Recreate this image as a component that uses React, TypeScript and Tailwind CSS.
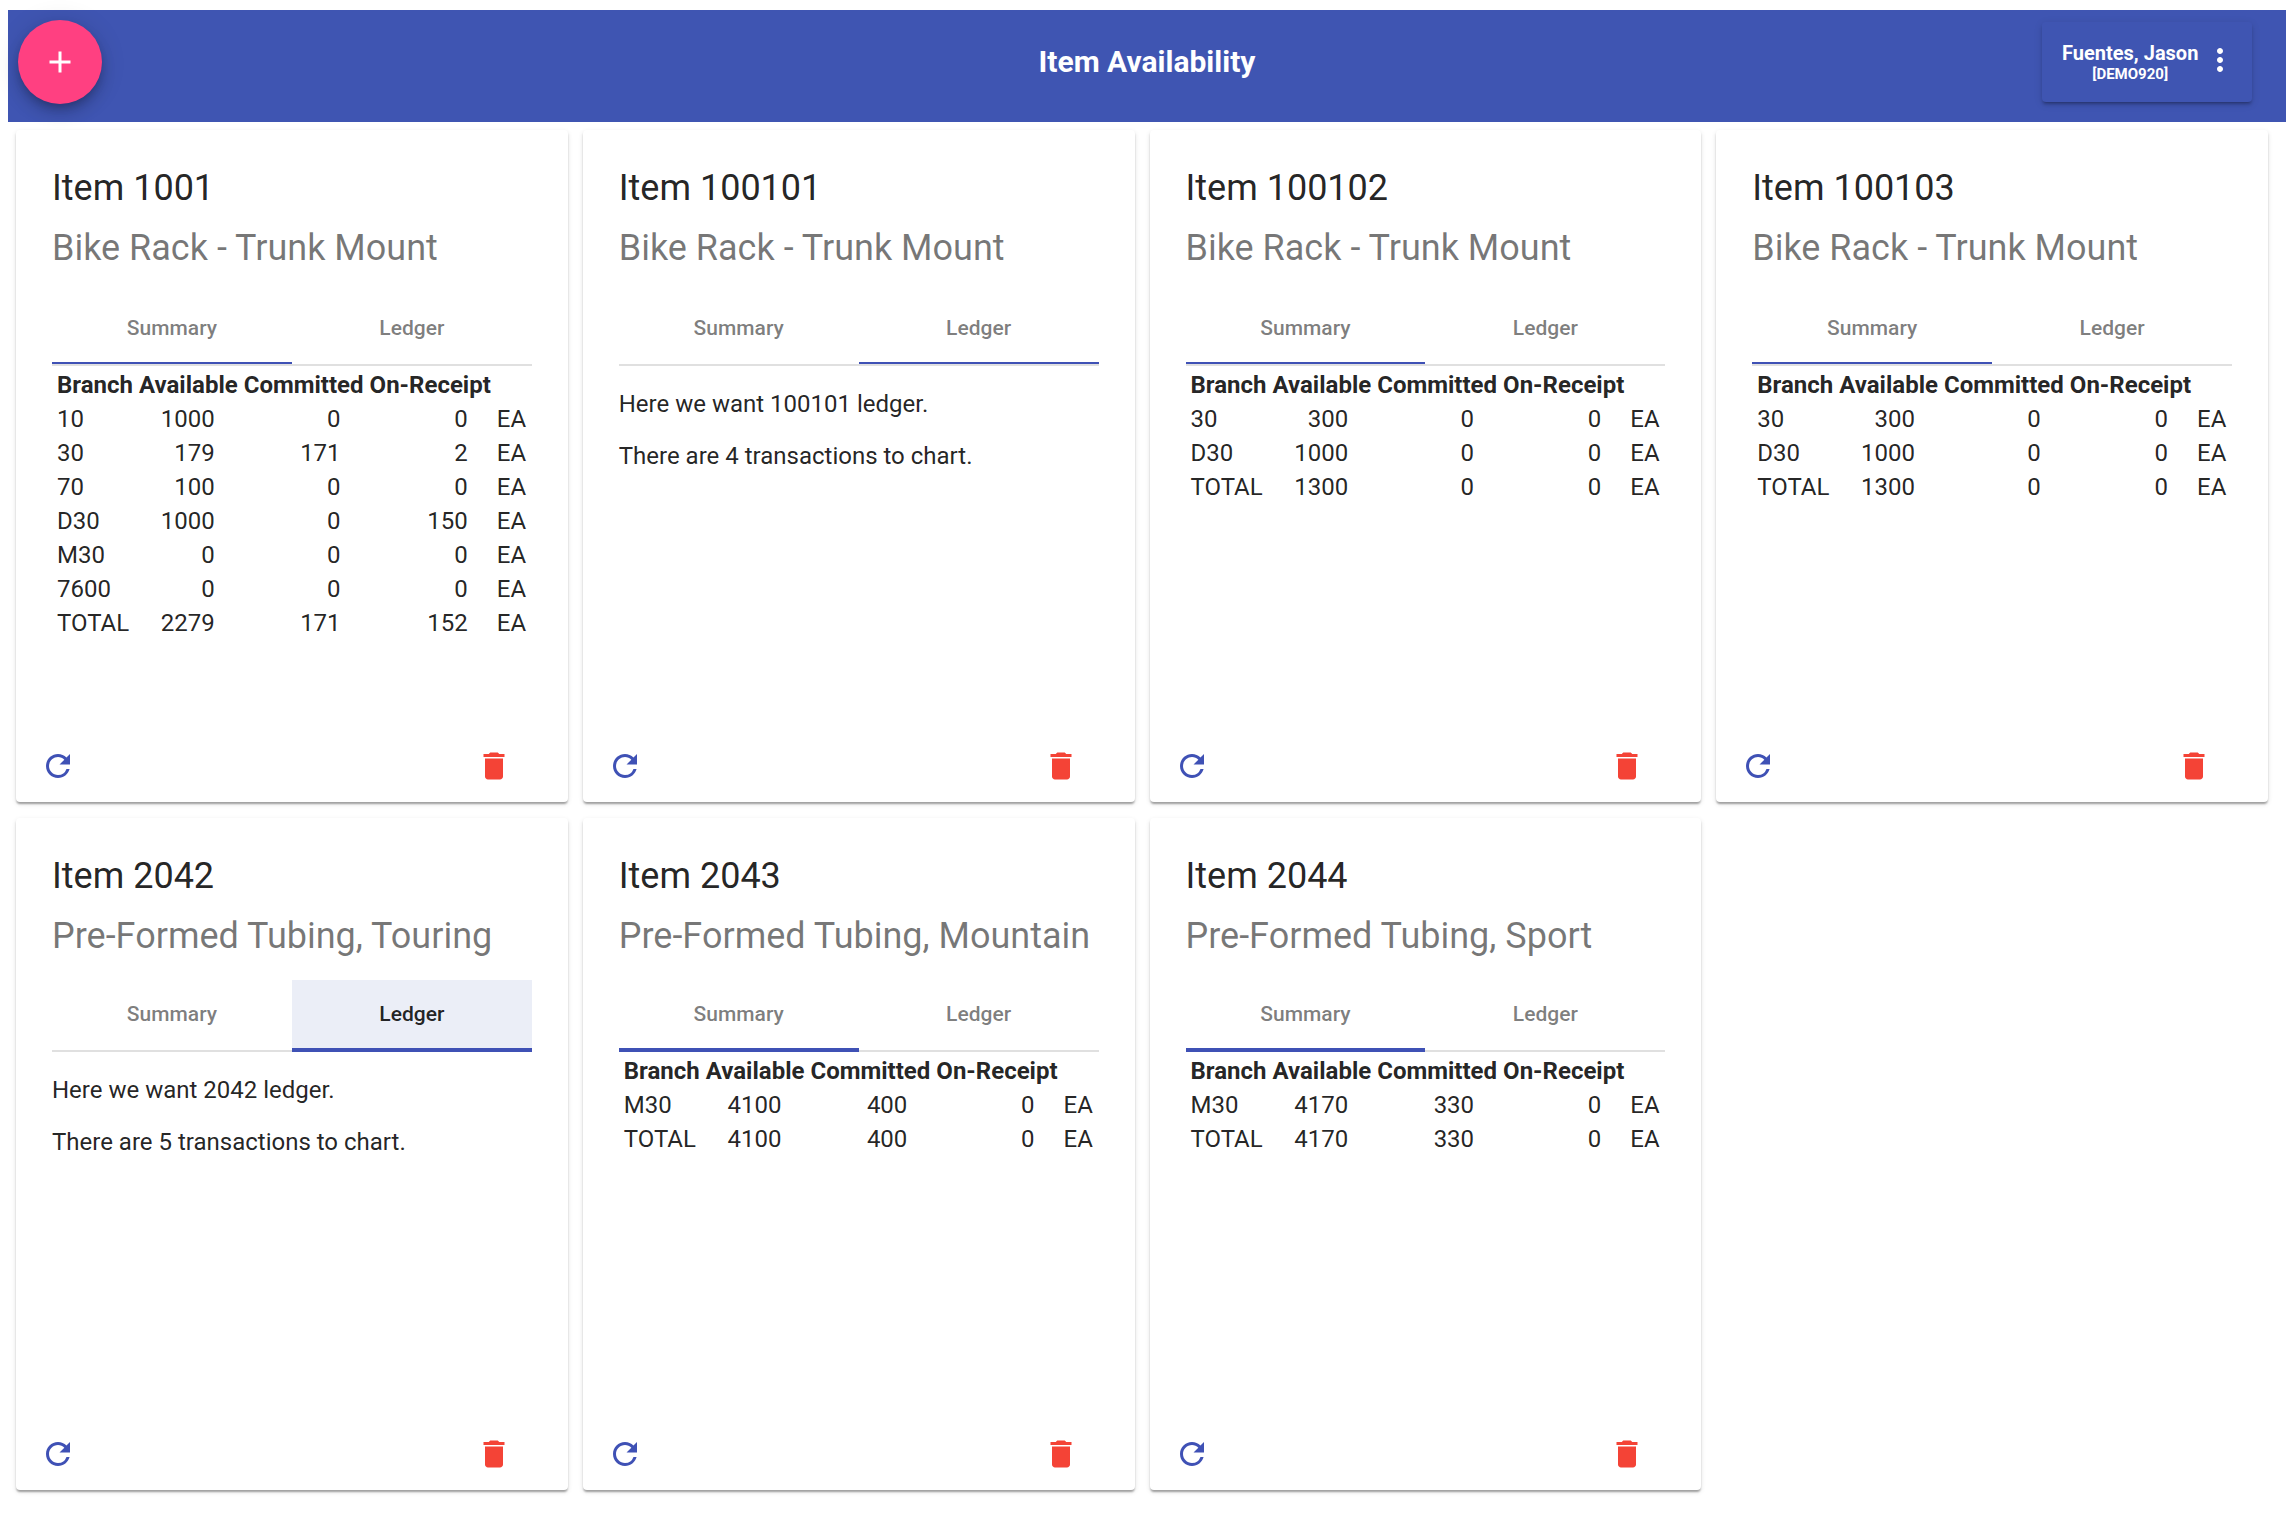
import { useState } from 'react';
import clsx from 'clsx';
import { MdAdd, MdDelete, MdMoreVert, MdRefresh } from 'react-icons/md';

type Tab = 'Summary' | 'Ledger';
type Row = [branch: string, available: number, committed: number, onReceipt: number];

type Item = {
  id: string;
  description: string;
  rows: Row[];
  transactions: number;
  tab: Tab;
  focused?: boolean;
  thinBar?: boolean;
};

const TABS: Tab[] = ['Summary', 'Ledger'];

const RACK_ROWS: Row[] = [
  ['30', 300, 0, 0],
  ['D30', 1000, 0, 0],
  ['TOTAL', 1300, 0, 0],
];

const ITEMS: Item[] = [
  {
    id: '1001',
    description: 'Bike Rack - Trunk Mount',
    rows: [
      ['10', 1000, 0, 0],
      ['30', 179, 171, 2],
      ['70', 100, 0, 0],
      ['D30', 1000, 0, 150],
      ['M30', 0, 0, 0],
      ['7600', 0, 0, 0],
      ['TOTAL', 2279, 171, 152],
    ],
    transactions: 12,
    tab: 'Summary',
    thinBar: true,
  },
  { id: '100101', description: 'Bike Rack - Trunk Mount', rows: RACK_ROWS, transactions: 4, tab: 'Ledger', thinBar: true },
  { id: '100102', description: 'Bike Rack - Trunk Mount', rows: RACK_ROWS, transactions: 4, tab: 'Summary', thinBar: true },
  { id: '100103', description: 'Bike Rack - Trunk Mount', rows: RACK_ROWS, transactions: 4, tab: 'Summary', thinBar: true },
  {
    id: '2042',
    description: 'Pre-Formed Tubing, Touring',
    rows: [
      ['M30', 4100, 400, 0],
      ['TOTAL', 4100, 400, 0],
    ],
    transactions: 5,
    tab: 'Ledger',
    focused: true,
  },
  {
    id: '2043',
    description: 'Pre-Formed Tubing, Mountain',
    rows: [
      ['M30', 4100, 400, 0],
      ['TOTAL', 4100, 400, 0],
    ],
    transactions: 5,
    tab: 'Summary',
  },
  {
    id: '2044',
    description: 'Pre-Formed Tubing, Sport',
    rows: [
      ['M30', 4170, 330, 0],
      ['TOTAL', 4170, 330, 0],
    ],
    transactions: 5,
    tab: 'Summary',
  },
];

function SummaryTable({ rows }: { rows: Row[] }) {
  return (
    <table className="mt-px border-separate border-spacing-[3px] text-2xl leading-[29px]">
      <thead>
        <tr>
          <th className="py-px pr-px pl-[2px] font-bold">Branch</th>
          <th className="py-px pr-px pl-[2px] font-bold">Available</th>
          <th className="py-px pr-px pl-[2px] font-bold">Committed</th>
          <th className="py-px pr-px pl-[2px] font-bold">On-Receipt</th>
          <td />
        </tr>
      </thead>
      <tbody>
        {rows.map(([branch, available, committed, onReceipt]) => (
          <tr key={branch}>
            <td className="py-px pr-px pl-[2px]">{branch}</td>
            <td className="py-px pr-6 text-right">{available}</td>
            <td className="py-px pr-6 text-right">{committed}</td>
            <td className="py-px pr-6 text-right">{onReceipt}</td>
            <td className="py-px pr-px pl-[2px]">EA</td>
          </tr>
        ))}
      </tbody>
    </table>
  );
}

function ItemCard({ item }: { item: Item }) {
  const [tab, setTab] = useState<Tab>(item.tab);

  return (
    <article className="flex min-h-[672px] flex-col rounded bg-white shadow-[0_3px_2px_-1px_rgba(0,0,0,0.2),0_2px_2px_0_rgba(0,0,0,0.14),0_2px_5px_0_rgba(0,0,0,0.12)]">
      <div className="px-9 pt-9">
        <h2 className="text-4xl leading-[44px] whitespace-nowrap">Item {item.id}</h2>
        <p className="mt-4 text-4xl leading-[44px] whitespace-nowrap text-black/54">{item.description}</p>

        <div
          role="tablist"
          className={clsx('flex border-b-2 border-[#e0e0e0]', item.thinBar ? 'mt-6' : 'mt-[22px]')}
        >
          {TABS.map((name) => {
            const active = tab === name;
            const focused = active && name === item.tab && item.focused;
            return (
              <button
                key={name}
                type="button"
                role="tab"
                aria-selected={active}
                onClick={() => setTab(name)}
                className={clsx(
                  'flex-1 cursor-pointer pt-[2px] text-[21px] font-medium',
                  item.thinBar ? 'h-[70px] border-b-2' : '-mb-[2px] h-[72px] border-b-4',
                  active ? 'border-[#3f51b5]' : 'border-transparent',
                  focused ? 'bg-[#ebeef7] text-black/87' : 'text-black/52'
                )}
              >
                {name}
              </button>
            );
          })}
        </div>

        {tab === 'Summary' ? (
          <SummaryTable rows={item.rows} />
        ) : (
          <div className="flex flex-col gap-6 py-6 text-2xl leading-7">
            <p>Here we want {item.id} ledger.</p>
            <p>There are {item.transactions} transactions to chart.</p>
          </div>
        )}
      </div>

      {/* Actions */}
      <div className="mt-auto flex justify-between pr-11 pb-[6px] pl-3">
        <button
          type="button"
          aria-label={`Refresh item ${item.id}`}
          className="flex size-15 cursor-pointer items-center justify-center rounded-full text-[#3f51b5]"
        >
          <MdRefresh className="size-9" />
        </button>
        <button
          type="button"
          aria-label={`Delete item ${item.id}`}
          className="flex size-15 cursor-pointer items-center justify-center rounded-full text-[#f44336]"
        >
          <MdDelete className="size-9" />
        </button>
      </div>
    </article>
  );
}

export default function App() {
  return (
    <div className="min-h-screen bg-white pt-[10px] font-[Roboto,sans-serif] text-black/87">
      <header className="mr-[6px] ml-2 grid h-28 grid-cols-[1fr_auto_1fr] bg-[#3f55b2] px-[10px] pt-[10px] text-white">
        <button
          type="button"
          aria-label="Add item"
          className="flex size-21 cursor-pointer items-center justify-center rounded-full bg-[#ff4081] shadow-[0_5px_8px_-2px_rgba(0,0,0,0.2),0_9px_15px_0_rgba(0,0,0,0.14),0_2px_27px_0_rgba(0,0,0,0.12)]"
        >
          <MdAdd className="size-9" />
        </button>

        <h1 className="pt-6 text-3xl leading-9 font-bold">Item Availability</h1>

        <button
          type="button"
          className="mt-[2px] mr-6 flex h-20 w-[210px] cursor-pointer items-center gap-1 justify-self-end rounded pb-1 pl-5 shadow-[0_3px_2px_-2px_rgba(0,0,0,0.2),0_3px_3px_0_rgba(0,0,0,0.14),0_2px_8px_0_rgba(0,0,0,0.12)]"
        >
          <span className="flex flex-col items-center pt-1 font-bold whitespace-nowrap">
            <span className="text-xl leading-6">Fuentes, Jason</span>
            <span className="text-[15px] leading-[18px]">[DEMO920]</span>
          </span>
          <MdMoreVert className="size-9" />
        </button>
      </header>

      <main className="grid grid-cols-4 gap-x-[15px] gap-y-4 pt-2 pr-6 pb-7 pl-4">
        {ITEMS.map((item) => (
          <ItemCard key={item.id} item={item} />
        ))}
      </main>
    </div>
  );
}
